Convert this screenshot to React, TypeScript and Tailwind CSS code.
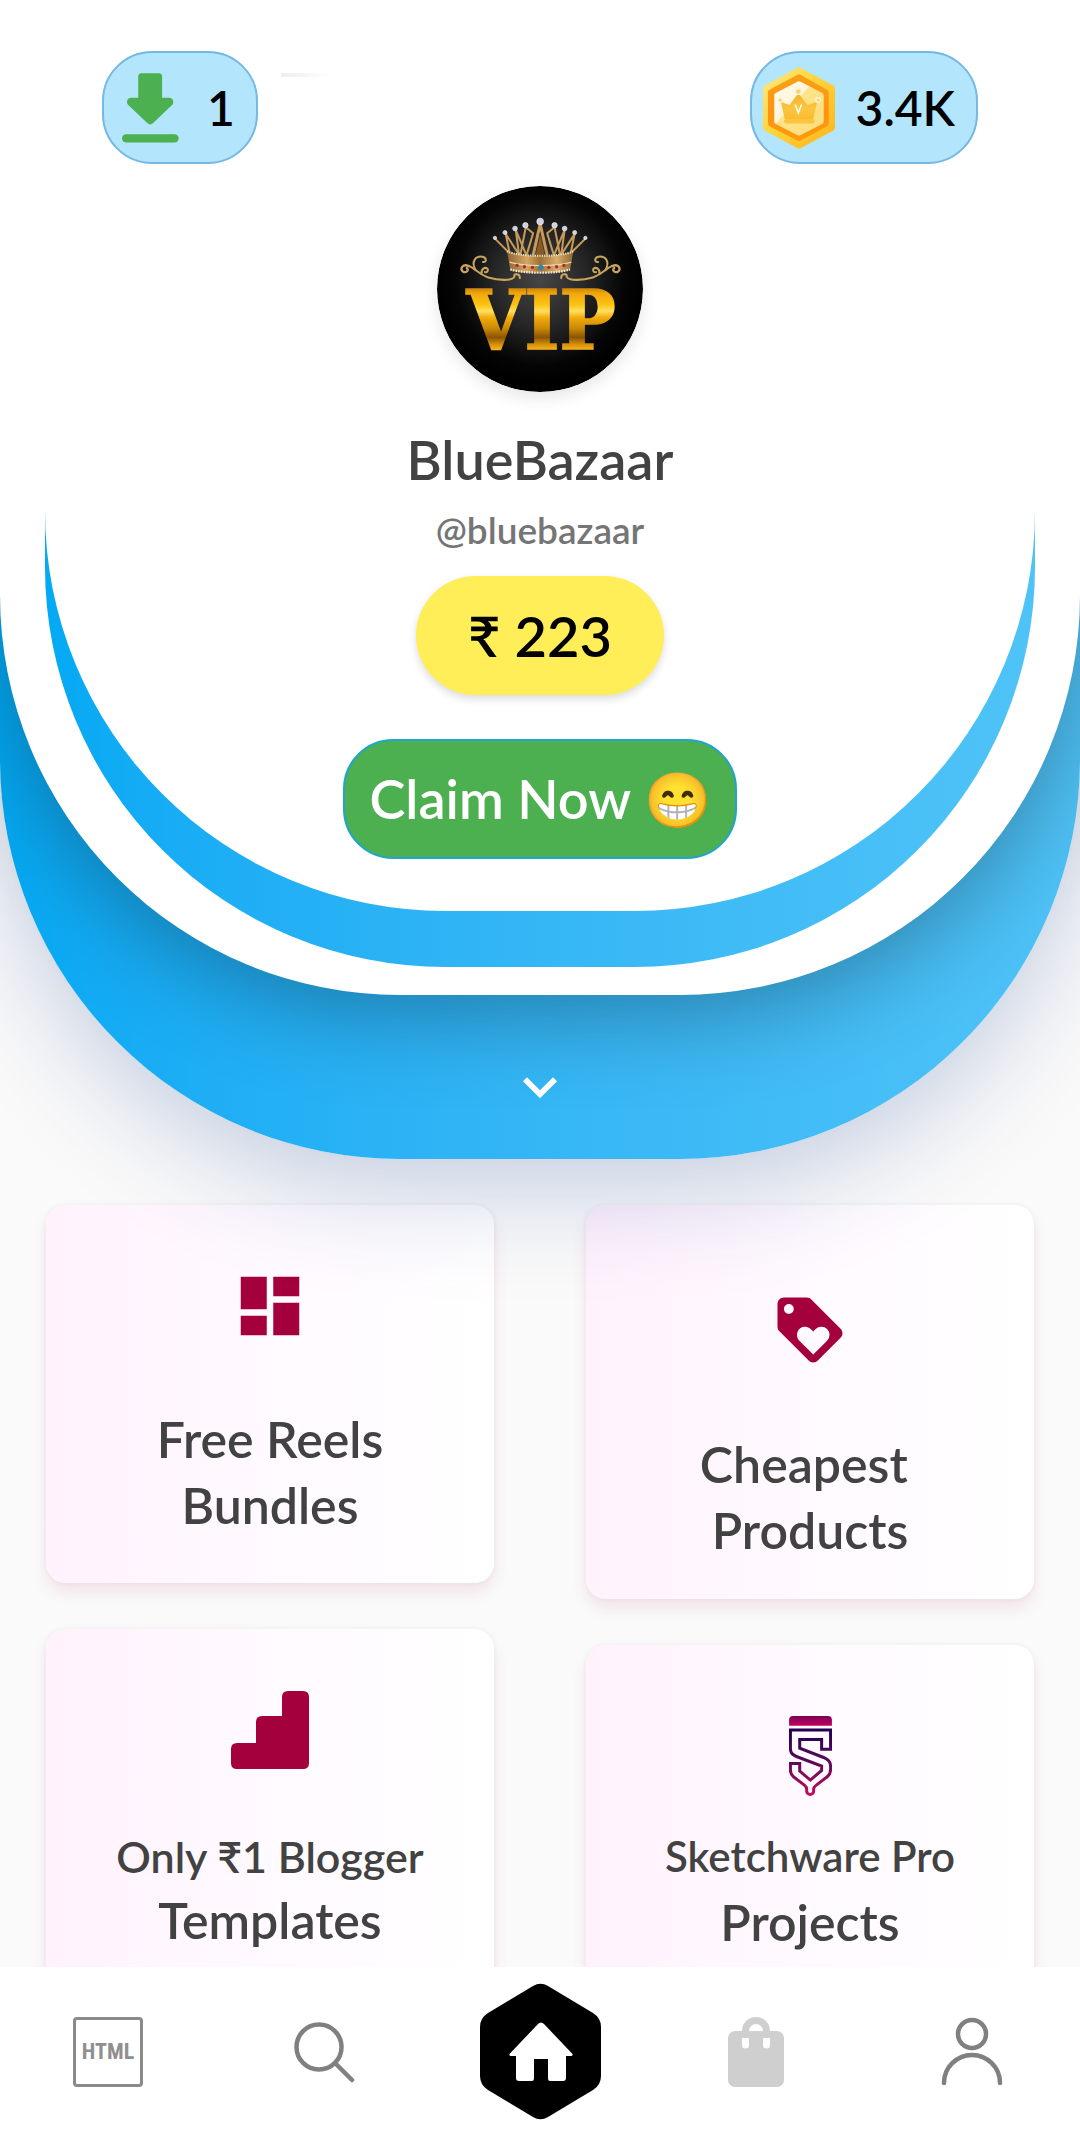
import type { ReactNode } from "react";
import { MdDashboard, MdKeyboardArrowDown, MdLoyalty } from "react-icons/md";

function DownloadIcon() {
  return (
    <svg viewBox="128 121 172 210" className="h-[70px] w-[57px]" aria-hidden="true" fill="#4caf50">
      <path d="M177 131 q0-10 10-10 H239 q10 0 10 10 V195 H270 c12 0 17 14 9 22 L222 271 q-9 9-18 0 L147 217 c-8-8-3-22 9-22 H177 z" />
      <rect x="128" y="305" width="171" height="25" rx="12.5" />
    </svg>
  );
}

function CoinIcon() {
  return (
    <svg viewBox="98 108 218 246" className="h-[82px] w-[72px]" aria-hidden="true">
      <defs>
        <linearGradient id="coinRim" x1="0" y1="0" x2="1" y2="1">
          <stop offset="0" stopColor="#ffe680" />
          <stop offset="0.45" stopColor="#ffd43a" />
          <stop offset="1" stopColor="#fbb61a" />
        </linearGradient>
        <linearGradient id="coinRing" x1="0" y1="0" x2="0" y2="1">
          <stop offset="0" stopColor="#f9a011" />
          <stop offset="0.6" stopColor="#ff9312" />
          <stop offset="1" stopColor="#fb9a0c" />
        </linearGradient>
        <linearGradient id="coinFace" x1="0" y1="0" x2="1" y2="1">
          <stop offset="0" stopColor="#fffaf0" />
          <stop offset="0.38" stopColor="#fff6da" />
          <stop offset="0.4" stopColor="#ffe48c" />
          <stop offset="1" stopColor="#ffdc7a" />
        </linearGradient>
        <linearGradient id="coinCrown" x1="0" y1="0" x2="0" y2="1">
          <stop offset="0" stopColor="#f7b32a" />
          <stop offset="0.6" stopColor="#fbc53f" />
          <stop offset="1" stopColor="#f8bb30" />
        </linearGradient>
      </defs>
      <path d="M207 118 L306 172 V290 L207 344 L108 290 V172 Z" fill="url(#coinRim)" stroke="url(#coinRim)" strokeWidth="20" strokeLinejoin="round" />
      <path d="M207 138 L288 184 V278 L207 322 L122 278 V184 Z" fill="url(#coinRing)" stroke="url(#coinRing)" strokeWidth="18" strokeLinejoin="round" />
      <path d="M207 158 L274 193 V272 L207 306 L140 272 V193 Z" fill="url(#coinFace)" stroke="url(#coinFace)" strokeWidth="16" strokeLinejoin="round" />
      <path d="M152 212 L178 222 L205 186 L233 222 L262 212 L250 265 H164 Z" fill="url(#coinCrown)" />
      <rect x="162" y="264" width="92" height="14" rx="5" fill="#fbc53f" />
      <g fill="#fbd36a" stroke="#fff6d8" strokeWidth="4">
        <circle cx="205" cy="181" r="9" />
        <circle cx="150" cy="207" r="7" />
        <circle cx="265" cy="207" r="7" />
      </g>
      <path d="M196 222 L205 246 L214 222" fill="none" stroke="#fffbe8" strokeWidth="5" strokeLinecap="round" />
    </svg>
  );
}

const pearls = [
  [224, 200, 5], [254, 184, 6], [284, 172, 7], [315, 162, 8], [359, 151, 10],
  [402, 162, 8], [432, 172, 7], [462, 184, 6], [494, 200, 5],
];

const gems = [
  [290, 282, "#b3262a"], [312, 286, "#b3262a"], [336, 288, "#b3262a"], [361, 288, "#2b86b8"],
  [385, 288, "#b3262a"], [408, 286, "#b3262a"], [430, 282, "#b3262a"],
] as const;

function Scroll() {
  return (
    <g fill="none" stroke="#c9a45c" strokeWidth="6" strokeLinecap="round">
      <path d="M298 320 C300 306 278 304 282 316 C274 330 232 326 204 318 C178 310 164 290 146 284" />
      <path d="M146 284 C128 276 118 292 128 300 C138 306 148 296 140 290" strokeWidth="7" />
      <path d="M166 296 C152 270 166 254 186 256 C200 258 200 274 188 272" />
      <path d="M184 308 C182 292 194 286 202 292 C206 298 200 304 194 302" />
    </g>
  );
}

function VipAvatar() {
  return (
    <svg viewBox="51 45 615 615" className="mt-[22px] size-[206px] rounded-full shadow-[0_6px_16px_rgba(0,0,0,0.1)]" role="img" aria-label="VIP crown">
      <defs>
        <radialGradient id="vipBg" cx="0.5" cy="0.46" r="0.5">
          <stop offset="0" stopColor="#464646" />
          <stop offset="0.45" stopColor="#262626" />
          <stop offset="0.82" stopColor="#050505" />
          <stop offset="1" stopColor="#000000" />
        </radialGradient>
        <linearGradient id="vipGold" gradientUnits="userSpaceOnUse" x1="0" y1="348" x2="0" y2="534">
          <stop offset="0" stopColor="#c9800a" />
          <stop offset="0.1" stopColor="#f0a80c" />
          <stop offset="0.28" stopColor="#fdc413" />
          <stop offset="0.38" stopColor="#ffdf62" />
          <stop offset="0.48" stopColor="#f3ad0c" />
          <stop offset="0.66" stopColor="#c98706" />
          <stop offset="0.8" stopColor="#8a5504" />
          <stop offset="0.92" stopColor="#d99209" />
          <stop offset="1" stopColor="#f6b41c" />
        </linearGradient>
        <linearGradient id="crownGold" x1="0" y1="0" x2="1" y2="0">
          <stop offset="0" stopColor="#8f6630" />
          <stop offset="0.3" stopColor="#d3a663" />
          <stop offset="0.5" stopColor="#9d7034" />
          <stop offset="0.75" stopColor="#d9ad6b" />
          <stop offset="1" stopColor="#8f6630" />
        </linearGradient>
      </defs>
      <circle cx="358.5" cy="352.5" r="307.5" fill="url(#vipBg)" />
      <g fill="none" stroke="#c69a58" strokeWidth="6" strokeLinejoin="round">
        <path d="M224 202 L268 246 L256 188 L296 250 L286 176 L318 252 L338 186 L316 168 L300 250" />
        <path d="M494 202 L450 246 L462 188 L422 250 L432 176 L400 252 L380 186 L402 168 L418 250" />
        <path d="M359 158 L338 252 M359 158 L380 252" strokeWidth="9" />
      </g>
      <path d="M345 252 L359 190 L373 252 Z" fill="#8a5a26" />
      <path d="M260 240 C300 258 420 258 458 240 L448 296 C410 308 310 308 270 296 Z" fill="url(#crownGold)" />
      <path d="M260 240 C300 258 420 258 458 240" fill="none" stroke="#f0e2c4" strokeWidth="6" strokeDasharray="4 3" />
      <path d="M268 272 C310 286 410 286 452 272" fill="none" stroke="#e8d5ad" strokeWidth="4" />
      <path d="M270 294 C310 307 410 307 448 294" fill="none" stroke="#efe6d2" strokeWidth="7" strokeDasharray="5 3" />
      {gems.map(([x, y, c]) => (
        <circle key={x} cx={x} cy={y} r={c === "#2b86b8" ? 8 : 5} fill={c} />
      ))}
      {pearls.map(([x, y, r]) => (
        <circle key={x} cx={x} cy={y} r={r} fill="#cfd2dc" stroke="#f4f5fa" strokeWidth="2" />
      ))}
      <Scroll />
      <g transform="translate(720 0) scale(-1 1)">
        <Scroll />
      </g>
      <text x="362" y="532" textAnchor="middle" fontSize="248" fontWeight="700" fontFamily="'DejaVu Serif Condensed', 'DejaVu Serif', serif" fill="url(#vipGold)" stroke="url(#vipGold)" strokeWidth="5">
        VIP
      </text>
    </svg>
  );
}

function StairsIcon() {
  return (
    <svg viewBox="0 0 78 78" className="size-[78px]" aria-hidden="true" fill="#a3003d">
      <path d="M6 78 q-6 0-6-6 V58 q0-6 6-6 H25 V31 q0-6 6-6 H51 V6 q0-6 6-6 H72 q6 0 6 6 V72 q0 6-6 6 Z" />
    </svg>
  );
}

function SketchwareIcon() {
  return (
    <svg viewBox="86 77 129 241" className="h-20 w-[43px]" aria-hidden="true">
      <defs>
        <linearGradient id="capFill" x1="0" y1="0" x2="0" y2="1">
          <stop offset="0" stopColor="#7b0055" />
          <stop offset="1" stopColor="#c3005f" />
        </linearGradient>
        <linearGradient id="bodyStroke" x1="0" y1="0" x2="0" y2="1">
          <stop offset="0" stopColor="#22004f" />
          <stop offset="0.5" stopColor="#5c0a58" />
          <stop offset="1" stopColor="#c20a5c" />
        </linearGradient>
      </defs>
      <path d="M86 106 V89 q0-12 12-12 H203 q12 0 12 12 V106 Z" fill="url(#capFill)" />
      <path
        d="M90 119 H211 V177 H184 V148 H118 V174 L190 202 Q211 211 211 228 V238 Q211 252 201 260 L167 286 Q160 291 160 298 V303 A10.500 10.500 0 0 1 139 303 V298 Q139 291 133 286 L99 260 Q90 252 90 240 V220 H118 V243 L150 270 L184 241 V228 L108 199 Q90 192 90 176 Z"
        fill="none"
        stroke="url(#bodyStroke)"
        strokeWidth="9"
      />
    </svg>
  );
}

function SearchIcon() {
  return (
    <svg viewBox="0 0 62 62" className="size-[62px]" aria-hidden="true" fill="none" stroke="#808080" strokeWidth="4.500" strokeLinecap="round">
      <circle cx="26" cy="26" r="22.500" />
      <path d="M43 43 L59 59" />
    </svg>
  );
}

function HomeIcon() {
  return (
    <svg viewBox="0 0 121 137" className="h-[137px] w-[121px]" aria-hidden="true">
      <path d="M53 3 Q60.500 -1.500 68 3 L113 30 Q121 35 121 44 V93 Q121 102 113 107 L68 134 Q60.500 138.500 53 134 L8 107 Q0 102 0 93 V44 Q0 35 8 30 Z" fill="#000" />
      <path d="M58 41 Q61 38 64 41 L92.500 71 Q93 73 91 73 H86 V95 Q86 98 83 98 H70 Q68 98 68 95 V76 H54 V95 Q54 98 52 98 H39 Q36 98 36 95 V73 H31 Q29 73 29.500 71 Z" fill="#fff" />
    </svg>
  );
}

function BagIcon() {
  return (
    <svg viewBox="0 0 56 70" className="h-[70px] w-14" aria-hidden="true">
      <path d="M14 17 V14 A14 14 0 0 1 42 14 V17 H35 V14 A7 7 0 0 0 21 14 V17 Z" fill="#cfcfcf" />
      <rect y="14" width="56" height="56" rx="7" fill="#cfcfcf" />
      <path d="M14 21 H21 V28 A3.500 3.500 0 0 1 14 28 Z M35 21 H42 V28 A3.500 3.500 0 0 1 35 28 Z" fill="#fff" />
    </svg>
  );
}

function UserIcon() {
  return (
    <svg viewBox="0 0 62 70" className="h-[70px] w-[62px]" aria-hidden="true" fill="none" stroke="#808080" strokeWidth="4.500" strokeLinecap="round">
      <circle cx="31" cy="17" r="14" />
      <path d="M3 66 A28 28 0 0 1 59 66" />
    </svg>
  );
}

type CardProps = { icon: ReactNode; children: ReactNode; className: string };

function Card({ icon, children, className }: CardProps) {
  return (
    <a
      href="#"
      className={
        "flex flex-col items-center whitespace-pre rounded-[20px] bg-gradient-to-r from-[#fff2fd] via-[#fffaff] to-white text-center text-[50px] leading-[66px] shadow-[0_10px_16px_rgba(163,0,93,0.09),0_0_6px_rgba(0,0,0,0.05)] " +
        className
      }
    >
      {icon}
      {children}
    </a>
  );
}

export default function App() {
  return (
    <div className="flex h-dvh flex-col overflow-hidden bg-[#fafafa] font-['Lato','Noto_Sans',sans-serif] font-semibold text-[#424242]">
      <main className="min-h-0 flex-1 overflow-x-hidden overflow-y-auto [scrollbar-width:none]">
        <header className="relative z-10 rounded-b-[400px] bg-gradient-to-r from-[#03a9f4] to-[#4fc3f7] shadow-[0_30px_110px_rgba(0,50,137,0.22)]">
          <div className="rounded-b-[400px] bg-white px-[45px] pb-7 shadow-[0_20px_90px_rgba(0,0,0,0.3)]">
            <div className="rounded-b-[400px] bg-gradient-to-r from-[#03a9f4] to-[#4fc3f7] pb-14">
              <div className="flex flex-col items-center rounded-b-[400px] bg-white pt-[51px] pb-[52px]">
                <div className="flex w-full items-center px-[57px] text-[48px] leading-none text-black">
                  <button className="flex h-[113px] items-center gap-7 rounded-[50px] border-2 border-[#74b9e6] bg-[#b3e5fc] pr-[21px] pl-[18px]">
                    <DownloadIcon />
                    <span>1</span>
                  </button>
                  <span className="mt-[22px] ml-[23px] h-1 w-12 self-start bg-gradient-to-r from-[#ededed] to-white" aria-hidden="true" />
                  <button className="ml-auto flex h-[113px] items-center gap-[21px] rounded-[50px] border-2 border-[#74b9e6] bg-[#b3e5fc] pr-[21px] pl-[11px]">
                    <CoinIcon />
                    <span>3.4K</span>
                  </button>
                </div>
                <VipAvatar />
                <h1 className="mt-9 text-[54px] leading-[64px]">BlueBazaar</h1>
                <p className="mt-[14px] text-[37px] leading-[48px] text-[#757575]">@bluebazaar</p>
                <div className="mt-[22px] flex h-[119px] items-center rounded-full bg-[#ffee58] px-[52px] text-[56px] leading-none text-black shadow-[0_4px_8px_rgba(0,0,0,0.14)]">
                  ₹ 223
                </div>
                <button className="mt-11 flex h-[120px] items-center rounded-[50px] border-2 border-[#1fa5cf] bg-[#4caf50] px-6 text-[54px] leading-none text-white">
                  Claim Now 😁
                </button>
              </div>
            </div>
          </div>
          <div className="flex justify-center pt-[58px] pb-[38px]">
            <button aria-label="Show more">
              <MdKeyboardArrowDown className="size-[68px] text-white" />
            </button>
          </div>
        </header>

        <section className="grid grid-cols-2 gap-[92px] px-[46px] pt-[46px] pb-[46px]">
          <div className="flex flex-col gap-[46px]">
            <Card icon={<MdDashboard className="size-[78px] text-[#a3003d]" />} className="gap-[61px] pt-[62px] pb-[45px]">
              <span>{"Free Reels\nBundles"}</span>
            </Card>
            <Card icon={<StairsIcon />} className="pt-[62px] pb-[45px]">
              <span className="mt-[58px] text-[43px] leading-[60px]">Only ₹1 Blogger</span>
              <span>Templates</span>
            </Card>
          </div>
          <div className="flex flex-col gap-[46px]">
            <Card icon={<MdLoyalty className="size-[78px] text-[#a3003d]" />} className="gap-[62px] pt-[86px] pb-9">
              <span>{"Cheapest \nProducts"}</span>
            </Card>
            <Card icon={<SketchwareIcon />} className="pt-[71px] pb-9">
              <span className="mt-[27px] text-[42px]">Sketchware Pro</span>
              <span>Projects</span>
            </Card>
          </div>
        </section>
      </main>

      <nav className="grid grid-cols-5 items-center justify-items-center bg-white pt-4 pb-6">
        <a href="#" className="flex size-[70px] items-center justify-center rounded-sm border-[3px] border-[#8a8a8a] font-['Roboto_Condensed','Lato',sans-serif] text-[22px] leading-none font-bold text-[#8f8f8f]">
          HTML
        </a>
        <a href="#" aria-label="Search"><SearchIcon /></a>
        <a href="#" aria-label="Home"><HomeIcon /></a>
        <a href="#" aria-label="Shop"><BagIcon /></a>
        <a href="#" aria-label="Profile"><UserIcon /></a>
      </nav>
    </div>
  );
}
